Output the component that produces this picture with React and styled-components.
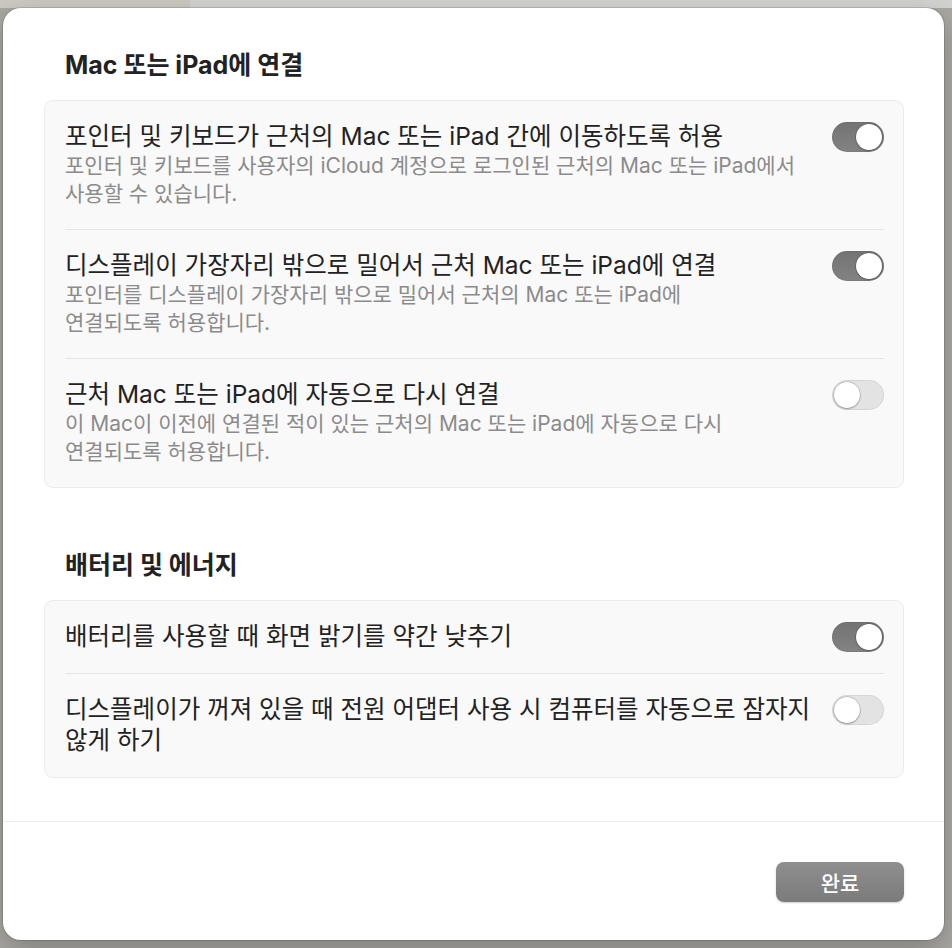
import React from 'react'
import styled, { createGlobalStyle } from 'styled-components'

const GlobalStyle = createGlobalStyle`
    html, body {
        margin:0;
        padding:0;
        background:#a9a8a3;
    }
    body {
        font-family:Inter, "Noto Sans CJK KR", sans-serif;
        -webkit-font-smoothing:antialiased;
    }`

const Backdrop = styled.div`
    width:952px;
    height:948px;
    padding:8px 8px 8px 3px;
    box-sizing:border-box;
    background:
        linear-gradient(90deg, #cdcbc1 0px, #cdcbc1 190px, #d3d3d2 190px) top / 100% 8px no-repeat,
        #a9a8a3;`

const Sheet = styled.div`
    width:941px;
    height:932px;
    background:#fff;
    border-radius:18px;
    box-shadow:0 0 0 1px rgba(0,0,0,0.12), 0 10px 30px rgba(0,0,0,0.25);
    display:flex;
    flex-direction:column;
    overflow:hidden;`

const Content = styled.div`
    flex:1;
    padding:42px 40px 0 41px;`

const SectionTitle = styled.h2`
    margin:0 0 20px 21px;
    font-size:25px;
    line-height:30px;
    font-weight:700;
    color:#222;`

const Group = styled.div`
    background:#f9f9f9;
    border:1px solid #ebebeb;
    border-radius:9px;
    padding:0 19px 0 20px;
    margin-bottom:${p => p.$last ? '0' : '62px'};`

const Row = styled.div`
    display:flex;
    align-items:flex-start;
    gap:20px;
    padding:20px 0 21px;
    border-top:${p => p.$first ? 'none' : '1px solid #e5e5e5'};`

const Texts = styled.div`
    flex:1;
    min-width:0;`

const RowTitle = styled.div`
    font-size:24.5px;
    line-height:31px;
    color:#222;
    white-space:pre;`

const RowDesc = styled.div`
    font-size:21px;
    line-height:28px;
    color:#8b8b8b;
    white-space:pre;`

const Track = styled.div`
    flex:none;
    width:52px;
    height:30px;
    margin-top:1px;
    border-radius:15px;
    box-sizing:border-box;
    padding:2px;
    display:flex;
    justify-content:${p => p.$on ? 'flex-end' : 'flex-start'};
    background:${p => p.$on ? 'linear-gradient(180deg, #737373, #838383)' : '#e3e3e3'};
    box-shadow:inset 0 0 0 1px rgba(0,0,0,0.06);`

const Knob = styled.div`
    width:26px;
    height:26px;
    border-radius:50%;
    background:#fff;
    box-shadow:0 0 0 0.5px rgba(0,0,0,0.25), 0 1px 2px rgba(0,0,0,0.25);`

const Footer = styled.div`
    border-top:1px solid #ececec;
    height:119px;
    box-sizing:border-box;
    padding:40px 40px 0 0;
    display:flex;
    justify-content:flex-end;
    align-items:flex-start;`

const DoneButton = styled.button`
    width:128px;
    height:40px;
    border:none;
    border-radius:8px;
    background:linear-gradient(180deg, #8f8f8f, #7b7b7b);
    box-shadow:0 1px 2px rgba(0,0,0,0.2);
    color:#fff;
    font-family:Inter, "Noto Sans CJK KR", sans-serif;
    font-size:21px;
    font-weight:500;`

function Toggle({ on }) {
    return (
        <Track $on={on}>
            <Knob/>
        </Track>
    )
}

const connect = [
    {
        title: '포인터 및 키보드가 근처의 Mac 또는 iPad 간에 이동하도록 허용',
        desc: '포인터 및 키보드를 사용자의 iCloud 계정으로 로그인된 근처의 Mac 또는 iPad에서\n사용할 수 있습니다.',
        on: true,
    },
    {
        title: '디스플레이 가장자리 밖으로 밀어서 근처 Mac 또는 iPad에 연결',
        desc: '포인터를 디스플레이 가장자리 밖으로 밀어서 근처의 Mac 또는 iPad에\n연결되도록 허용합니다.',
        on: true,
    },
    {
        title: '근처 Mac 또는 iPad에 자동으로 다시 연결',
        desc: '이 Mac이 이전에 연결된 적이 있는 근처의 Mac 또는 iPad에 자동으로 다시\n연결되도록 허용합니다.',
        on: false,
    },
]

const battery = [
    { title: '배터리를 사용할 때 화면 밝기를 약간 낮추기', on: true },
    { title: '디스플레이가 꺼져 있을 때 전원 어댑터 사용 시 컴퓨터를 자동으로 잠자지\n않게 하기', on: false },
]

function App() {
    return (
        <Backdrop>
            <GlobalStyle/>
            <Sheet>
                <Content>
                    <SectionTitle>Mac 또는 iPad에 연결</SectionTitle>
                    <Group>
                        {connect.map((item, i) => (
                            <Row key={i} $first={i === 0}>
                                <Texts>
                                    <RowTitle>{item.title}</RowTitle>
                                    <RowDesc>{item.desc}</RowDesc>
                                </Texts>
                                <Toggle on={item.on}/>
                            </Row>
                        ))}
                    </Group>

                    <SectionTitle>배터리 및 에너지</SectionTitle>
                    <Group $last>
                        {battery.map((item, i) => (
                            <Row key={i} $first={i === 0}>
                                <Texts>
                                    <RowTitle>{item.title}</RowTitle>
                                </Texts>
                                <Toggle on={item.on}/>
                            </Row>
                        ))}
                    </Group>
                </Content>
                <Footer>
                    <DoneButton>완료</DoneButton>
                </Footer>
            </Sheet>
        </Backdrop>
    )
}

export default App
